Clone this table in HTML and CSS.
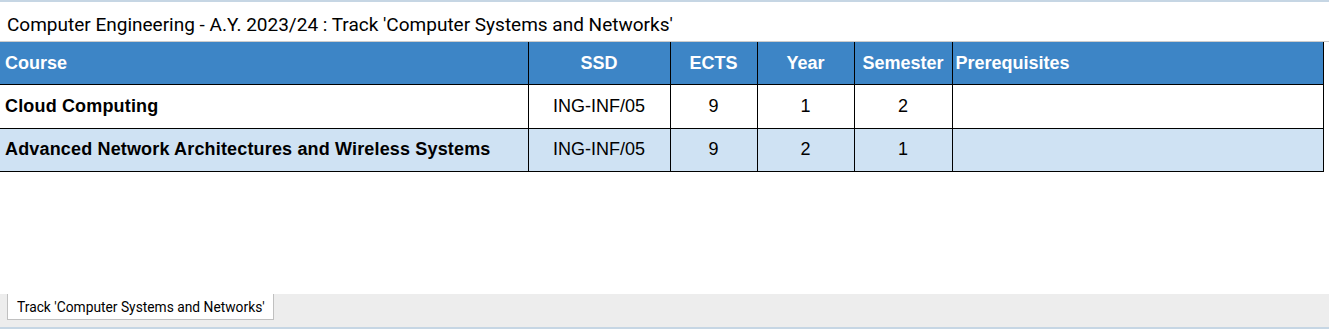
FILE: index.html
```html
<!DOCTYPE html>
<html lang="en">
<head>
<meta charset="utf-8">
<title>Computer Engineering - A.Y. 2023/24</title>
<link rel="stylesheet" href="styles.css">
</head>
<body>
<div class="page">
  <div class="doc-title">Computer Engineering - A.Y. 2023/24 : Track 'Computer Systems and Networks'</div>
  <div class="sheet">
    <table class="grid">
      <colgroup>
        <col class="c-course">
        <col class="c-ssd">
        <col class="c-ects">
        <col class="c-year">
        <col class="c-sem">
        <col class="c-pre">
      </colgroup>
      <thead>
        <tr class="head">
          <th class="left">Course</th>
          <th>SSD</th>
          <th>ECTS</th>
          <th>Year</th>
          <th>Semester</th>
          <th class="left">Prerequisites</th>
        </tr>
      </thead>
      <tbody>
        <tr class="row r1">
          <td class="name">Cloud Computing</td>
          <td>ING-INF/05</td>
          <td>9</td>
          <td>1</td>
          <td>2</td>
          <td></td>
        </tr>
        <tr class="row r2">
          <td class="name">Advanced Network Architectures and Wireless Systems</td>
          <td>ING-INF/05</td>
          <td>9</td>
          <td>2</td>
          <td>1</td>
          <td></td>
        </tr>
      </tbody>
    </table>
  </div>
  <div class="tabbar">
    <div class="tab">Track 'Computer Systems and Networks'</div>
  </div>
</div>
</body>
</html>
```

FILE: styles.css
```css
html, body {
  margin: 0;
  padding: 0;
  background: #ffffff;
}

.page {
  display: flex;
  flex-direction: column;
  height: 100vh;
  border-top: 2px solid #c6d6e4;
  border-bottom: 2px solid #c6d6e4;
  box-sizing: border-box;
}

.doc-title {
  height: 40px;
  box-sizing: border-box;
  border-bottom: 1px solid #cccccc;
  padding-left: 7px;
  padding-top: 5px;
  display: flex;
  align-items: center;
  font-family: Roboto, "Liberation Sans", sans-serif;
  font-size: 19px;
  color: #000000;
  flex: none;
}

.sheet {
  flex: 1;
}

.grid {
  border-collapse: collapse;
  table-layout: fixed;
  width: 1323px;
  font-family: "Liberation Sans", Arial, sans-serif;
  font-size: 18px;
}

.c-course { width: 528px; }
.c-ssd { width: 142px; }
.c-ects { width: 87px; }
.c-year { width: 97px; }
.c-sem { width: 98px; }
.c-pre { width: 371px; }

.grid th,
.grid td {
  border-right: 1px solid #000000;
  border-bottom: 1px solid #000000;
  padding: 0 3px;
  text-align: center;
  vertical-align: middle;
  white-space: nowrap;
  overflow: hidden;
}

.grid th.left,
.grid td.name {
  text-align: left;
}

.grid th:first-child,
.grid td:first-child {
  padding-left: 5px;
}

.head th {
  background: #3d85c6;
  color: #ffffff;
  font-weight: bold;
  height: 42px;
  padding-top: 2px;
  padding-bottom: 0;
  box-sizing: border-box;
}

.row td {
  color: #000000;
  height: 42px;
  padding-top: 1px;
}

.row.r2 td {
  background: #cfe2f3;
  height: 42px;
  padding-top: 0;
}

.grid td.name {
  font-weight: bold;
  letter-spacing: 0.16px;
}

.tabbar {
  flex: none;
  height: 33px;
  background: #ededed;
  display: flex;
  align-items: flex-start;
  padding-left: 7px;
}

.tab {
  background: #ffffff;
  border: 1px solid #c0c0c0;
  border-top: none;
  height: 26px;
  box-sizing: border-box;
  padding: 0 8px 0 9px;
  display: flex;
  align-items: center;
  font-family: Roboto, "Liberation Sans", sans-serif;
  font-size: 13.8px;
  color: #000000;
}
```
